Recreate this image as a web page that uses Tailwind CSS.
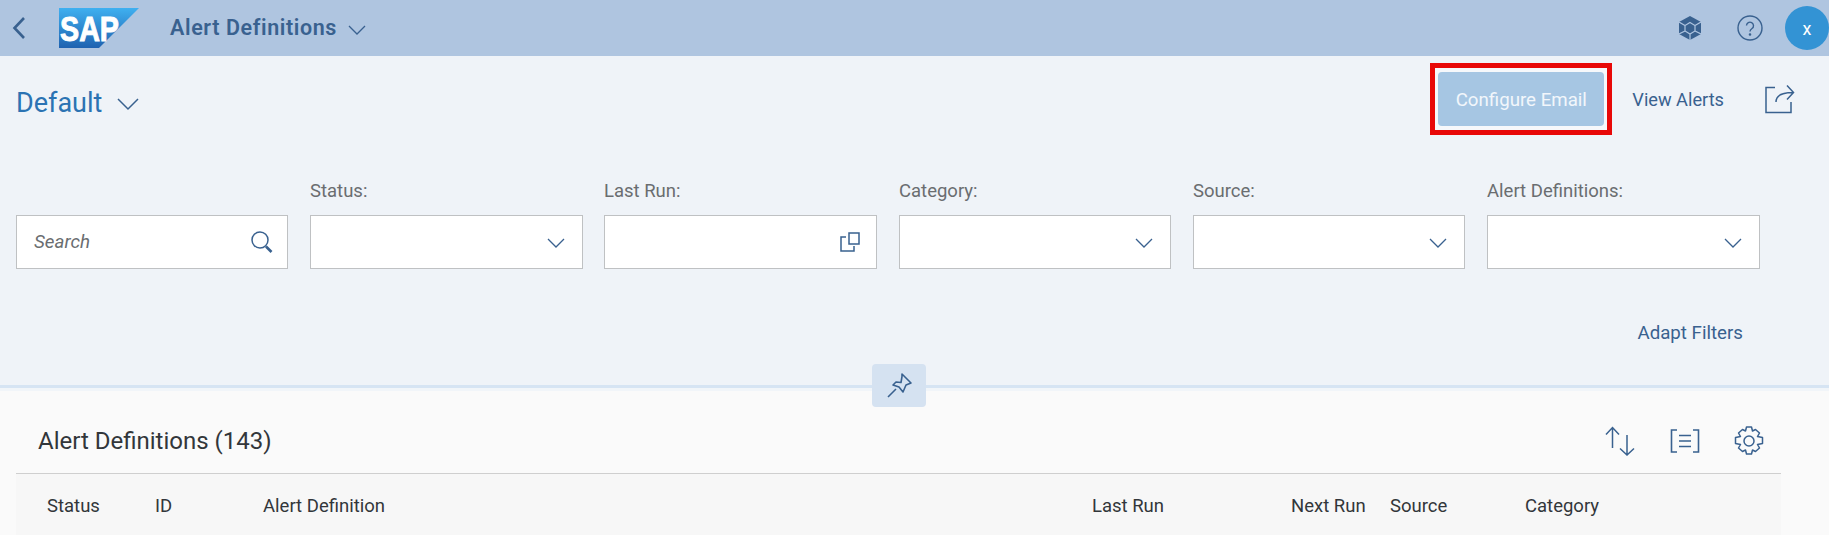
<!DOCTYPE html>
<html lang="en">
<head>
<meta charset="UTF-8">
<title>Alert Definitions</title>
<script src="https://cdn.jsdelivr.net/npm/@tailwindcss/browser@4"></script>
</head>
<body class="w-[1829px] h-[535px] overflow-hidden bg-[#fafafa] font-['Roboto','Noto_Sans',sans-serif]">
    <!-- Shell bar -->
    <header class="h-14 bg-[#afc5e0] flex items-center text-[#39618f]">
        <svg class="ml-[12px] w-[14px] h-[24px]" viewBox="0 0 14 24" fill="none" stroke="currentColor" stroke-width="2.6"><path d="M12 2 2.500 12 12 22"/></svg>
        <svg class="ml-[33px] w-[80px] h-[40px]" viewBox="0 0 80 40">
            <defs><linearGradient id="sapg" x1="0" y1="0" x2="0" y2="1"><stop offset="0" stop-color="#3fb0f0"/><stop offset="1" stop-color="#1f62b0"/></linearGradient></defs>
            <polygon points="0,0 80,0 40,40 0,40" fill="url(#sapg)"/>
            <text x="1" y="33" font-family="Liberation Sans" font-weight="700" font-size="35" textLength="59" lengthAdjust="spacingAndGlyphs" fill="#fff" stroke="#fff" stroke-width="1">SAP</text>
        </svg>
        <span class="ml-[31px] text-[21.500px] font-semibold tracking-[0.6px]">Alert Definitions</span>
        <svg class="ml-[11px] mt-[3px] w-[18px] h-[10px]" viewBox="0 0 18 10" fill="none" stroke="currentColor" stroke-width="1.300"><path d="M1 1l8 8 8-8"/></svg>
        <div class="ml-auto flex items-center">
            <svg class="w-[22px] h-[24px]" viewBox="0 0 22 24">
                <path d="M11 0 22 6v12l-11 6-11-6V6z" fill="currentColor"/>
                <path d="M11 6.500 16 9.500v5.500l-5 3-5-3V9.500zM0 6l6 3.500M22 6l-6 3.500M0 18l6-3M22 18l-6-3M11 18v6" fill="none" stroke="#afc5e0" stroke-width="1.200"/>
            </svg>
            <svg class="ml-[36px] w-[26px] h-[26px]" viewBox="0 0 26 26" fill="none" stroke="currentColor" stroke-width="1.400"><circle cx="13" cy="13" r="12"/><path d="M9.500 10.500a3.500 3.500 0 1 1 5.500 3c-1.300.9-2 1.500-2 3"/><circle cx="13" cy="19.500" r=".6"/></svg>
            <div class="ml-[22px] w-[44px] h-[44px] rounded-full bg-[#3393d4] text-white text-[18px] flex items-center justify-center">x</div>
        </div>
    </header>

    <!-- Filter bar -->
    <section class="h-[332px] bg-[#eff3f8] border-b-[3px] border-[#d6e4f3] shadow-[0_3px_0_#f1f5f9] relative z-10 px-4">
        <div class="h-[86px] flex items-center text-[#39618f]">
            <span class="text-[27px] leading-none text-[#2b73b3] mt-[8px]">Default</span>
            <svg class="ml-[15px] mt-[10px] w-[22px] h-[13px]" viewBox="0 0 22 13" fill="none" stroke="currentColor" stroke-width="1.500"><path d="M1 1l10 10L21 1"/></svg>
            <div class="ml-auto flex items-center">
                <div class="border-[5px] border-[#e80808] bg-[#f6f8fb] px-[3px] py-[4px]">
                    <div class="w-[166px] h-[54px] pt-[2px] rounded bg-[#a6c6e3] text-white/85 text-[18.700px] flex items-center justify-center">Configure Email</div>
                </div>
                <span class="ml-[20px] mt-[2px] text-[18.200px]">View Alerts</span>
                <svg class="ml-[41px] mr-[18px] w-[30px] h-[30px]" viewBox="0 0 30 30" fill="none" stroke="currentColor" stroke-width="1.500"><path d="M10 3.500H1v25h25V18M11 18c0-6 5-9.500 17-9.500M22 1.500l6.500 7-6.500 7"/></svg>
            </div>
        </div>
        <div class="mt-[37px] flex items-end gap-[22px]">
            <div class="w-[272px] h-[54px] bg-white border border-[#bfc1c3] flex items-center justify-between pl-[17px] pr-[14px]">
                <span class="text-[18.800px] italic text-[#6a6d70]">Search</span>
                <svg class="w-[22px] h-[22px]" viewBox="0 0 22 22" fill="none" stroke="#39618f" stroke-width="1.500"><circle cx="9" cy="9" r="8"/><path d="M15 15.500l5.500 5.500" stroke-width="2.600"/></svg>
            </div>
            <div class="w-[273px]">
                <div class="text-[18.500px] leading-[24px] mb-[12px] text-[#6a6d70]">Status:</div>
                <div class="h-[54px] bg-white border border-[#bfc1c3] flex items-center justify-end pr-[17px]">
                    <svg class="w-[18px] h-[10px] mt-[2px]" viewBox="0 0 18 10" fill="none" stroke="#39618f" stroke-width="1.300"><path d="M1 1l8 8 8-8"/></svg>
                </div>
            </div>
            <div class="w-[273px] -ml-[1px]">
                <div class="text-[18.500px] leading-[24px] mb-[12px] text-[#6a6d70]">Last Run:</div>
                <div class="h-[54px] bg-white border border-[#bfc1c3] flex items-center justify-end pr-[16px]">
                    <svg class="w-[20px] h-[20px]" viewBox="0 0 20 20" fill="none" stroke="#39618f" stroke-width="1.500"><path d="M6 5H1v14h13v-5"/><rect x="9" y="1" width="10" height="11"/></svg>
                </div>
            </div>
            <div class="w-[272px]">
                <div class="text-[18.500px] leading-[24px] mb-[12px] text-[#6a6d70]">Category:</div>
                <div class="h-[54px] bg-white border border-[#bfc1c3] flex items-center justify-end pr-[17px]">
                    <svg class="w-[18px] h-[10px] mt-[2px]" viewBox="0 0 18 10" fill="none" stroke="#39618f" stroke-width="1.300"><path d="M1 1l8 8 8-8"/></svg>
                </div>
            </div>
            <div class="w-[272px]">
                <div class="text-[18.500px] leading-[24px] mb-[12px] text-[#6a6d70]">Source:</div>
                <div class="h-[54px] bg-white border border-[#bfc1c3] flex items-center justify-end pr-[17px]">
                    <svg class="w-[18px] h-[10px] mt-[2px]" viewBox="0 0 18 10" fill="none" stroke="#39618f" stroke-width="1.300"><path d="M1 1l8 8 8-8"/></svg>
                </div>
            </div>
            <div class="w-[273px]">
                <div class="text-[18.500px] leading-[24px] mb-[12px] text-[#6a6d70]">Alert Definitions:</div>
                <div class="h-[54px] bg-white border border-[#bfc1c3] flex items-center justify-end pr-[17px]">
                    <svg class="w-[18px] h-[10px] mt-[2px]" viewBox="0 0 18 10" fill="none" stroke="#39618f" stroke-width="1.300"><path d="M1 1l8 8 8-8"/></svg>
                </div>
            </div>
        </div>
        <div class="mt-[52px] pr-[70px] text-right text-[18.700px] leading-[24px] text-[#39618f]">Adapt Filters</div>
        <!-- Pin sits over the bar's bottom edge -->
        <button class="absolute left-[872px] top-[308px] w-[54px] h-[43px] rounded bg-[#d5e2f1] flex items-center justify-center">
            <svg class="w-[25px] h-[25px]" viewBox="0 0 25 25" fill="none" stroke="#39618f" stroke-width="1.600"><path d="M1 24l8-8M15 1l9 9-5 2-3 7-4-5-6-2 3-3 5 .5 1-6z" stroke-linejoin="round"/></svg>
        </button>
    </section>

    <!-- Table -->
    <section class="px-4 bg-[#fafafa]">
        <div class="h-[86px] pt-[20px] pl-[22px] pr-[17px] border-b border-[#cfcfcf] flex items-center mr-[32px]">
            <h2 class="text-[24px] leading-none text-[#32363a]">Alert Definitions (143)</h2>
            <div class="ml-auto flex items-center text-[#39618f]">
                <svg class="w-[30px] h-[30px]" viewBox="0 0 30 30" fill="none" stroke="currentColor" stroke-width="1.500"><path d="M7.500 22V1.500M1 8.500 7.500 1.500 14 8.500M22 9v20M15 22.500 22 29l7-6.500"/></svg>
                <svg class="ml-[35px] w-[30px] h-[24px]" viewBox="0 0 30 24" fill="none" stroke="currentColor" stroke-width="1.600"><path d="M7 1H1.500v22H7M23 1h5.500v22H23M9 6.500h12M9 12h12M9 17.500h12"/></svg>
                <svg class="ml-[34px] w-[30px] h-[30px]" viewBox="0 0 30 30" fill="none" stroke="currentColor" stroke-width="1.500"><circle cx="15" cy="15" r="5"/><path d="M12.500 1h5l1 4 3-1.500 4 3.500-2 3.500 5 1v6l-5 1 2 3.500-4 3.500-3-1.500-1 4h-5l-1-4-3 1.500-4-3.500 2-3.500-5-1v-6l5-1-2-3.500 4-3.500 3 1.500z" stroke-linejoin="round"/></svg>
            </div>
        </div>
        <div class="h-[61px] mr-[32px] bg-[#f7f7f7] grid grid-cols-[108px_108px_829px_199px_99px_135px_1fr] pl-[31px] pt-[20px] text-[18.500px] leading-[24px] text-[#32363a]">
            <span>Status</span><span>ID</span><span>Alert Definition</span><span>Last Run</span><span>Next Run</span><span>Source</span><span>Category</span>
        </div>
    </section>
</body>
</html>
